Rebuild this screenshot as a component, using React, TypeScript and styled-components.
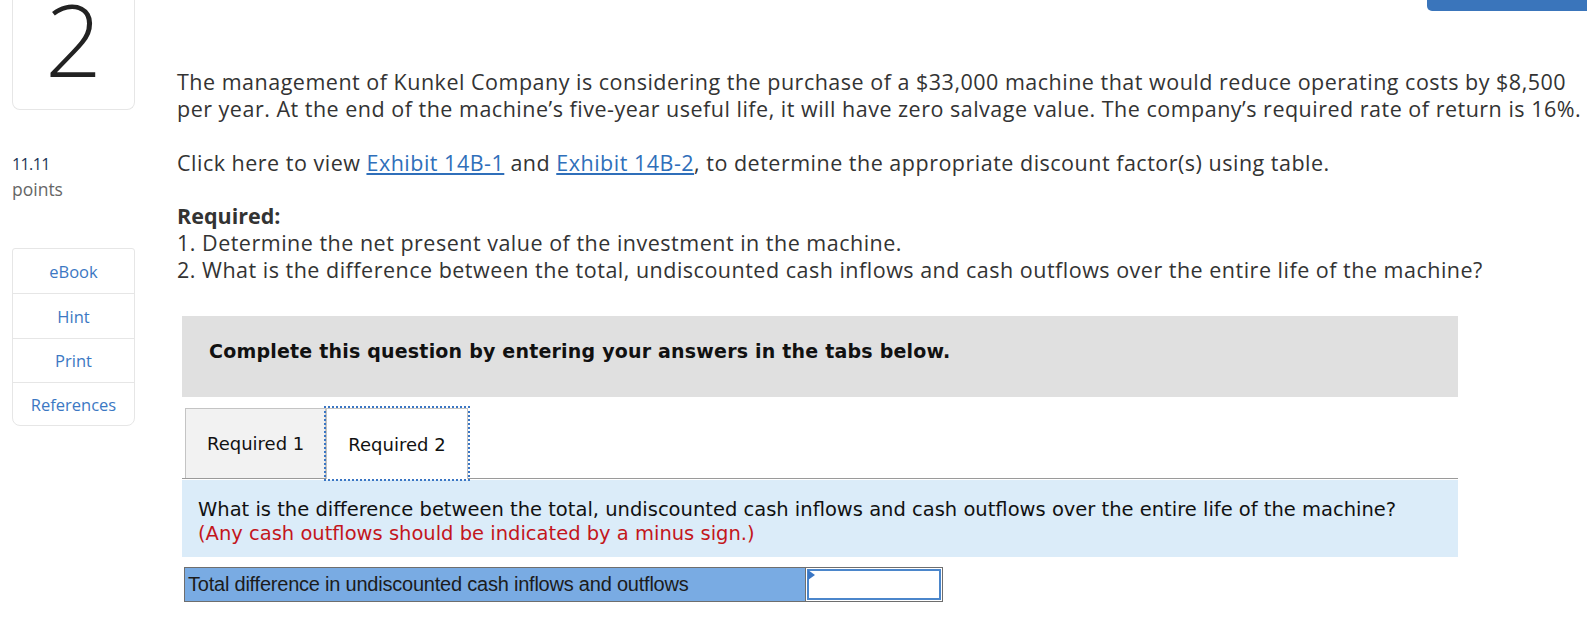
import styled, { createGlobalStyle } from "styled-components";

const GlobalStyle = createGlobalStyle`
  body {
    margin: 0;
    background: #fff;
    font-family: "Open Sans", "Liberation Sans", sans-serif;
    color: #333;
  }
`;

const Page = styled.div`
  display: flex;
  align-items: flex-start;
  width: 1587px;
  height: 617px;
  overflow: hidden;
  position: relative;
`;

const Sidebar = styled.div`
  width: 123px;
  margin-left: 12px;
  flex-shrink: 0;
  display: flex;
  flex-direction: column;
`;

const NumberBox = styled.div`
  height: 110px;
  box-sizing: border-box;
  border: 1px solid #e6e6e6;
  border-top: none;
  border-radius: 0 0 8px 8px;
  display: flex;
  justify-content: center;
  align-items: flex-start;
`;

const BigNumber = styled.span`
  font-family: "Open Sans", sans-serif;
  font-weight: 300;
  font-size: 100px;
  line-height: 76px;
  color: #222;
`;

const Score = styled.div`
  margin-top: 43px;
  font-size: 16px;
  line-height: 22px;
  color: #1d3557;
  letter-spacing: -0.6px;
`;

const ScoreLabel = styled.div`
  margin-top: 2px;
  font-size: 17.5px;
  line-height: 24px;
  color: #666;
`;

const Menu = styled.div`
  margin-top: 47px;
  border: 1px solid #e6e6e6;
  border-radius: 3px 3px 8px 8px;
  display: flex;
  flex-direction: column;
`;

const MenuItem = styled.div<{ h: number }>`
  height: ${(p) => p.h}px;
  display: flex;
  align-items: center;
  justify-content: center;
  font-size: 16.5px;
  color: #3c78c3;
  & + & {
    border-top: 1px solid #e6e6e6;
  }
`;

const Main = styled.div`
  margin-left: 42px;
  flex: 1;
  padding-top: 68px;
`;

const Para = styled.p<{ gap?: number }>`
  margin: ${(p) => p.gap ?? 0}px 0 0;
  font-size: 21.5px;
  line-height: 27px;
  letter-spacing: 0.5px;
  white-space: nowrap;
  color: #333;
`;

const LinkText = styled.a`
  color: #2f6fba;
  text-decoration: underline;
`;

const Strong = styled.span`
  font-weight: 700;
  letter-spacing: 0;
`;

const Answer = styled.div`
  margin: 33px 0 0 5px;
  width: 1276px;
  font-family: "DejaVu Sans", Verdana, sans-serif;
`;

const Instruction = styled.div`
  height: 81px;
  box-sizing: border-box;
  background: #e0e0e0;
  display: flex;
  align-items: center;
  padding: 0 0 12px 27px;
  font-size: 19px;
  letter-spacing: 0.2px;
  font-weight: 700;
  color: #111;
`;

const TabRow = styled.div`
  margin-top: 9px;
  height: 72px;
  display: flex;
  align-items: flex-end;
  padding-left: 3px;
  border-bottom: 1px solid #9a9a9a;
`;

const Tab = styled.div<{ active?: boolean }>`
  box-sizing: border-box;
  height: ${(p) => (p.active ? 71 : 70)}px;
  padding: 0 21px;
  display: flex;
  align-items: center;
  font-size: 18px;
  color: #111;
  background: ${(p) => (p.active ? "#fff" : "#f2f2f2")};
  border: 1px solid #c4c4c4;
  border-bottom: none;
  outline: ${(p) => (p.active ? "2px dotted #3a76c4" : "none")};
  outline-offset: 0;
  margin-bottom: ${(p) => (p.active ? -1 : 0)}px;
  position: relative;
`;

const Question = styled.div`
  margin-top: 1px;
  height: 77px;
  box-sizing: border-box;
  background: #dbecf9;
  padding: 18px 0 0 16px;
  font-size: 19.5px;
  line-height: 24px;
  color: #111;
`;

const Note = styled.div`
  color: #c3161c;
`;

const AnswerTable = styled.div`
  margin: 10px 0 0 2px;
  width: 759px;
  height: 35px;
  display: flex;
  box-sizing: border-box;
  border: 1px solid #6e6e6e;
  font-family: "Liberation Sans", Arial, sans-serif;
`;

const LabelCell = styled.div`
  width: 617px;
  background: #79abe3;
  display: flex;
  align-items: center;
  padding-left: 3px;
  font-size: 20px;
  letter-spacing: -0.22px;
  color: #1c1c1c;
  border-right: 1px solid #6e6e6e;
`;

const InputCell = styled.div`
  flex: 1;
  padding: 1px;
  position: relative;
`;

const Input = styled.input`
  box-sizing: border-box;
  width: 100%;
  height: 100%;
  border: 2px solid #4b86cb;
  outline: none;
  padding: 0 6px;
  font-size: 16px;
`;

const Marker = styled.span`
  position: absolute;
  left: 2px;
  top: 2px;
  width: 0;
  height: 0;
  border-top: 5px solid transparent;
  border-bottom: 5px solid transparent;
  border-left: 7px solid #3a76c4;
`;

const TopButton = styled.div`
  position: absolute;
  right: 0;
  top: 0;
  width: 160px;
  height: 11px;
  background: #3a75bb;
  border-radius: 0 0 0 5px;
`;

export default function App() {
  return (
    <Page>
      <GlobalStyle />
      <Sidebar>
        <NumberBox>
          <BigNumber>2</BigNumber>
        </NumberBox>
        <Score>11.11</Score>
        <ScoreLabel>points</ScoreLabel>
        <Menu>
          <MenuItem h={44}>eBook</MenuItem>
          <MenuItem h={44}>Hint</MenuItem>
          <MenuItem h={43}>Print</MenuItem>
          <MenuItem h={42}>References</MenuItem>
        </Menu>
      </Sidebar>
      <Main>
        <Para>
          The management of Kunkel Company is considering the purchase of a $33,000 machine that would reduce operating costs by $8,500
          <br />
          per year. At the end of the machine’s five-year useful life, it will have zero salvage value. The company’s required rate of return is 16%.
        </Para>
        <Para gap={27}>
          Click here to view <LinkText>Exhibit 14B-1</LinkText> and <LinkText>Exhibit 14B-2</LinkText>, to determine the appropriate discount factor(s) using table.
        </Para>
        <Para gap={26}>
          <Strong>Required:</Strong>
          <br />
          1. Determine the net present value of the investment in the machine.
          <br />
          2. What is the difference between the total, undiscounted cash inflows and cash outflows over the entire life of the machine?
        </Para>
        <Answer>
          <Instruction>Complete this question by entering your answers in the tabs below.</Instruction>
          <TabRow>
            <Tab>Required 1</Tab>
            <Tab active>Required 2</Tab>
          </TabRow>
          <Question>
            What is the difference between the total, undiscounted cash inflows and cash outflows over the entire life of the machine?
            <Note>(Any cash outflows should be indicated by a minus sign.)</Note>
          </Question>
          <AnswerTable>
            <LabelCell>Total difference in undiscounted cash inflows and outflows</LabelCell>
            <InputCell>
              <Input />
              <Marker />
            </InputCell>
          </AnswerTable>
        </Answer>
      </Main>
      <TopButton />
    </Page>
  );
}
